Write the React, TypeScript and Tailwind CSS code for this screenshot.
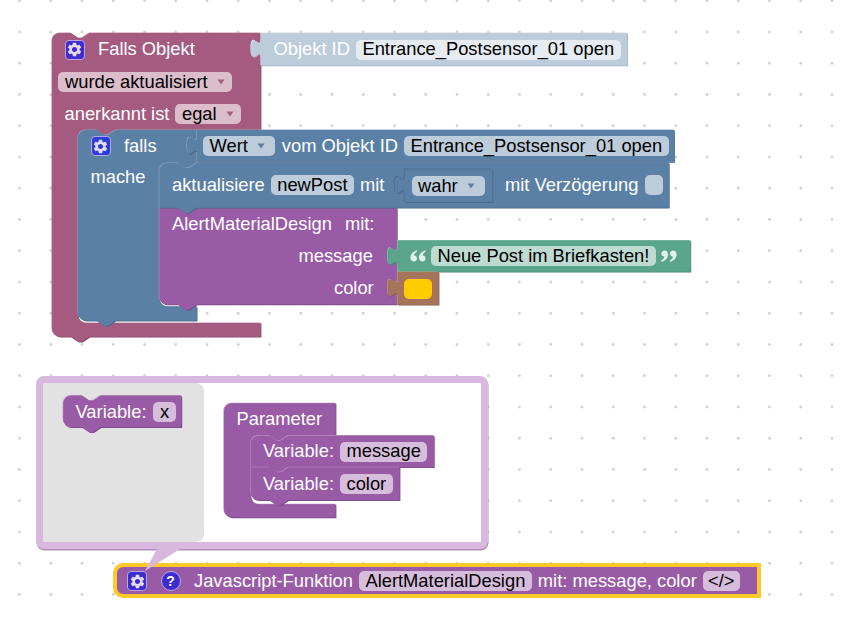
import type { ReactNode } from 'react';
import { MdSettings } from 'react-icons/md';

const NW = 18.75;

// top edge notch, drawn going right, starts at x
const notch = (x: number, y: number) => `L${x},${y} l7.5,5 h3.75 l7.5,-5`;
// bottom edge tab, drawn going left, x is the left side of the tab
const tab = (x: number, y: number) => `L${x + NW},${y} l-7.5,5 h-3.75 l-7.5,-5`;

const valueBlock = (x: number, y: number, r: number, b: number) =>
  `M${x},${y} H${r} V${b} H${x} V${y + 25} c0,-12.5 -10,10 -10,-9.375 s10,3.125 10,-9.375 Z`;

const hat = { fill: '#a55b80', light: '#c58fa9', dark: '#844966' };
const blue = { fill: '#5b80a5', light: '#8da6c0', dark: '#496684' };
const blueInset = { fill: '#5b80a5', light: '#46658a', dark: '#46658a' };
const purple = { fill: '#995ba5', light: '#b98cc0', dark: '#7a4984' };
const green = { fill: '#5ba58c', light: '#8dc0af', dark: '#498470' };
const brown = { fill: '#a5745b', light: '#c09d8d', dark: '#845d49' };
const idShadow = { fill: '#bdccdb', light: '#d3dde7', dark: '#a3b1bf' };

type Tone = { fill: string; light: string; dark: string };

function Shape({ d, tone }: { d: string; tone: Tone }) {
  return (
    <g>
      <path d={d} fill={tone.light} transform="translate(-0.6,-0.6)" />
      <path d={d} fill={tone.dark} transform="translate(0.7,0.7)" />
      <path d={d} fill={tone.fill} />
    </g>
  );
}

const blocks: { d: string; tone: Tone }[] = [
  {
    tone: hat,
    d: `M52,41 a8,8 0 0 1 8,-8 ${notch(70.75, 33)} H260.7 V130 ${tab(96.75, 130)} H86 a8,8 0 0 0 -8,8 V315 a8,8 0 0 0 8,8 H260.7 V336.7 ${tab(70.75, 336.7)} H60 a8,8 0 0 1 -8,-8 Z`,
  },
  {
    tone: blue,
    d: `M78,138 a8,8 0 0 1 8,-8 ${notch(96.75, 130)} H197 V163 ${tab(178, 163)} H167.3 a8,8 0 0 0 -8,8 V298.5 a8,8 0 0 0 8,8 H196.8 V320.7 ${tab(96.75, 320.7)} H86 a8,8 0 0 1 -8,-8 Z`,
  },
  {
    tone: purple,
    d: `M159.3,208 ${notch(178, 208)} H397 V304.6 ${tab(178, 304.6)} H167.3 a8,8 0 0 1 -8,-8 Z`,
  },
  {
    tone: blue,
    d: `M159.3,171 a8,8 0 0 1 8,-8 ${notch(178, 163)} H669 V207.7 ${tab(178, 207.7)} H159.3 Z`,
  },
  { tone: idShadow, d: valueBlock(261, 33, 627.3, 65.5) },
  { tone: blue, d: valueBlock(197, 130, 674.2, 162) },
  { tone: blueInset, d: valueBlock(404.5, 169.3, 492.5, 202.3) },
  { tone: green, d: valueBlock(397.5, 240.5, 690.5, 271.7) },
  { tone: brown, d: valueBlock(397.5, 272, 438.7, 304.7) },
  // mutator blocks
  {
    tone: purple,
    d: `M63.3,403.7 a8,8 0 0 1 8,-8 ${notch(82, 395.7)} H181.5 V427.3 ${tab(82, 427.3)} H71.3 a8,8 0 0 1 -8,-8 Z`,
  },
  {
    tone: purple,
    d: `M224,411.3 a8,8 0 0 1 8,-8 H335.7 V435.7 ${tab(269.5, 435.7)} H258.7 a8,8 0 0 0 -8,8 V496.3 a8,8 0 0 0 8,8 H335.7 V517.5 H232 a8,8 0 0 1 -8,-8 Z`,
  },
  {
    tone: purple,
    d: `M250.7,443.7 a8,8 0 0 1 8,-8 ${notch(269.5, 435.7)} H434 V467.3 ${tab(269.5, 467.3)} H250.7 Z`,
  },
  {
    tone: purple,
    d: `M250.7,467.3 ${notch(269.5, 467.3)} H399.7 V500.3 ${tab(269.5, 500.3)} H258.7 a8,8 0 0 1 -8,-8 Z`,
  },
];

function Gear({ className }: { className: string }) {
  return (
    <span className={`flex h-5 w-5 shrink-0 items-center justify-center rounded-[4px] border border-[#b9a8e0] ${className}`}>
      <MdSettings className="h-[17px] w-[17px] text-[#e4dcf6]" />
    </span>
  );
}

function Pill({ className, children }: { className: string; children: ReactNode }) {
  return (
    <span className={`flex h-5 shrink-0 items-center rounded-[5px] px-[6.5px] text-black ${className}`}>{children}</span>
  );
}

function Arrow({ className }: { className: string }) {
  return (
    <svg viewBox="0 0 8 6" className={`ml-[9px] mr-[1px] h-[6px] w-2 ${className}`}>
      <path d="M0.5,0.5 H7.5 L4,5.5 Z" />
    </svg>
  );
}

function Row({ className, children }: { className: string; children: ReactNode }) {
  return <div className={`absolute flex h-5 items-center whitespace-nowrap text-white ${className}`}>{children}</div>;
}

function Quote({ flip }: { flip?: boolean }) {
  return (
    <svg viewBox="0 0 16 12" className={`h-3 w-4 shrink-0 text-[#e4f0ec] ${flip ? 'rotate-180' : ''}`}>
      <path
        fill="currentColor"
        d="M6.8,0.2 C3.2,1.4 0.4,3.8 0.4,7.6 C0.4,10 1.8,11.6 3.8,11.6 C5.6,11.6 7,10.3 7,8.5 C7,6.7 5.7,5.6 4.1,5.6 C4.3,4 5.4,2.6 7.2,1.6 Z M15.4,0.2 C11.8,1.4 9,3.8 9,7.6 C9,10 10.4,11.6 12.4,11.6 C14.2,11.6 15.6,10.3 15.6,8.5 C15.6,6.7 14.3,5.6 12.7,5.6 C12.9,4 14,2.6 15.8,1.6 Z"
      />
    </svg>
  );
}

export default function App() {
  const dotsX = Array.from({ length: 27 }, (_, i) => 19.5 + i * 31.25);
  const dotsY = Array.from({ length: 20 }, (_, i) => 0.75 + i * 31.25);

  return (
    <div className="relative h-[621px] w-[845px] overflow-hidden bg-white font-['Liberation_Sans',Arial,sans-serif] text-[18.33px] leading-none">
      <svg width={845} height={621} className="absolute inset-0">
        {dotsX.map((x) =>
          dotsY.map((y) => <circle key={`${x}-${y}`} cx={x} cy={y} r={1.4} fill="#d2d2d2" />),
        )}
      </svg>

      {/* mutator bubble */}
      <div className="absolute left-[36px] top-[375.5px] flex h-[173.5px] w-[451.5px] rounded-[8px] border-[7px] border-[#d8b8de] bg-white shadow-[0.5px_1.5px_0_#b48fbc]">
        <div className="h-full w-[161px] rounded-r-[8px] bg-[#e2e2e2]" />
      </div>

      <svg width={845} height={621} className="absolute inset-0">
        {blocks.map((b, i) => (
          <Shape key={i} d={b.d} tone={b.tone} />
        ))}
        <path
          d="M123,565 H759 V596 H123 a8,8 0 0 1 -8,-8 V573 a8,8 0 0 1 8,-8 Z"
          fill="#995ba5"
          stroke="#ffc928"
          strokeWidth={4}
        />
        <polygon points="157,549 180,549 145,571" fill="#d8b8de" />
      </svg>

      {/* hat block */}
      <Row className="left-[64.5px] top-[39.5px]">
        <Gear className="bg-[#4029cf]" />
        <span className="ml-[13.5px]">Falls Objekt</span>
      </Row>
      <Row className="left-[58px] top-[72px]">
        <Pill className="pl-[7px] bg-[#dbbdcc]">
          wurde aktualisiert
          <Arrow className="fill-[#a55b80]" />
        </Pill>
      </Row>
      <Row className="left-[64.5px] top-[104px]">
        <span>anerkannt ist</span>
        <Pill className="ml-[6px] bg-[#dbbdcc]">
          egal
          <Arrow className="fill-[#a55b80]" />
        </Pill>
      </Row>
      <Row className="left-[273.5px] top-[39.5px]">
        <span>Objekt ID</span>
        <Pill className="ml-[6px] bg-[#e5ebf1]">Entrance_Postsensor_01 open</Pill>
      </Row>

      {/* falls block */}
      <Row className="left-[90.5px] top-[136px]">
        <Gear className="bg-[#2c3dd8]" />
        <span className="ml-[13.5px]">falls</span>
      </Row>
      <Row className="left-[203px] top-[136px]">
        <Pill className="pr-[9px] bg-[#bdccdb]">
          Wert
          <Arrow className="fill-[#5b80a5]" />
        </Pill>
        <span className="ml-[7px]">vom Objekt ID</span>
        <Pill className="ml-[6px] bg-[#bdccdb]">Entrance_Postsensor_01 open</Pill>
      </Row>
      <Row className="left-[90.5px] top-[167px]">mache</Row>

      {/* aktualisiere block */}
      <Row className="left-[172px] top-[175px]">
        <span>aktualisiere</span>
        <Pill className="ml-[6px] bg-[#bdccdb]">newPost</Pill>
        <span className="ml-[6px]">mit</span>
      </Row>
      <Row className="left-[411.5px] top-[176px]">
        <Pill className="pr-[9px] bg-[#bdccdb]">
          wahr
          <Arrow className="fill-[#5b80a5]" />
        </Pill>
      </Row>
      <Row className="left-[505px] top-[175px]">
        <span>mit Verzögerung</span>
        <span className="ml-[7px] h-5 w-[18px] rounded-[5px] bg-[#bdccdb]" />
      </Row>

      {/* AlertMaterialDesign block */}
      <Row className="left-[172px] top-[214px]">
        <span>AlertMaterialDesign</span>
        <span className="ml-[13px]">mit:</span>
      </Row>
      <Row className="left-[298.5px] top-[246px]">message</Row>
      <Row className="left-[334px] top-[278px]">color</Row>
      <Row className="left-[410px] top-[246px]">
        <Quote />
        <Pill className="ml-[5px] bg-[#bddbd1]">Neue Post im Briefkasten!</Pill>
        <span className="ml-[5px]">
          <Quote flip />
        </span>
      </Row>
      <Row className="left-[403.5px] top-[278.5px]">
        <span className="h-5 w-[28px] rounded-[5px] bg-[#ffcc00]" />
      </Row>

      {/* mutator */}
      <Row className="left-[75.5px] top-[402px]">
        <span>Variable:</span>
        <Pill className="ml-[7px] bg-[#d6bddb]">x</Pill>
      </Row>
      <Row className="left-[236.5px] top-[409.5px]">Parameter</Row>
      <Row className="left-[263px] top-[441.5px]">
        <span>Variable:</span>
        <Pill className="ml-[6px] bg-[#d6bddb]">message</Pill>
      </Row>
      <Row className="left-[263px] top-[474px]">
        <span>Variable:</span>
        <Pill className="ml-[6px] bg-[#d6bddb]">color</Pill>
      </Row>

      {/* function block */}
      <Row className="left-[127px] top-[571px]">
        <Gear className="bg-[#3c2bd0]" />
        <span className="ml-[13.5px] flex h-5 w-5 shrink-0 items-center justify-center rounded-full border border-[#b9a8e0] bg-[#3c2bd0] text-[14px] font-bold">
          ?
        </span>
        <span className="ml-[13.5px]">Javascript-Funktion</span>
        <Pill className="ml-[6px] bg-[#d6bddb]">AlertMaterialDesign</Pill>
        <span className="ml-[6px]">mit: message, color</span>
        <Pill className="ml-[6px] w-[37px] justify-center px-0 bg-[#d6bddb]">&lt;/&gt;</Pill>
      </Row>
    </div>
  );
}
